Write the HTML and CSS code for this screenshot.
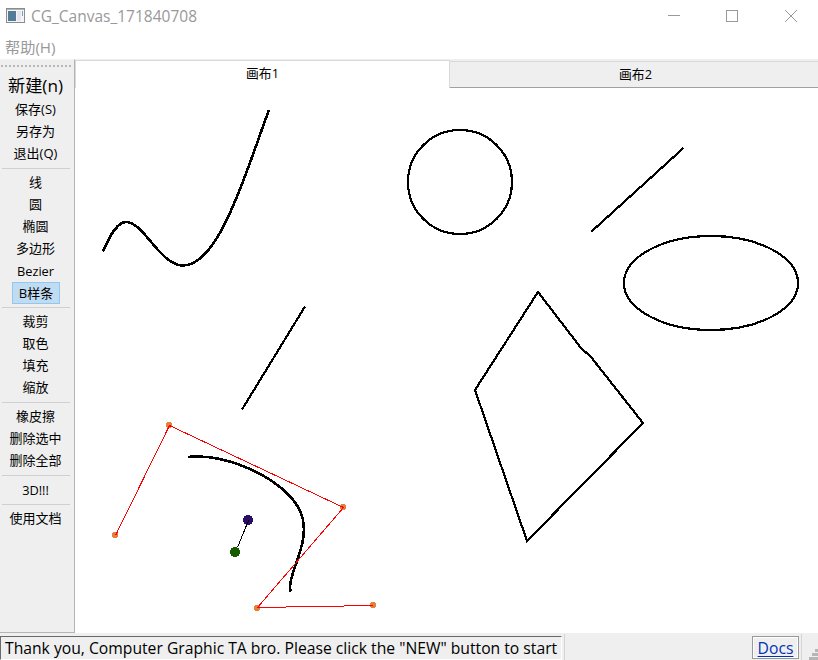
FILE: index.html
```
<!DOCTYPE html>
<html lang="zh-CN">
<head>
<meta charset="utf-8">
<title>CG_Canvas_171840708</title>
<link rel="stylesheet" href="styles.css">
</head>
<body>
<div class="window">
  <header class="titlebar">
    <svg class="app-icon" width="19" height="15" viewBox="0 0 19 15" shape-rendering="crispEdges">
      <rect x="0.5" y="0.5" width="18" height="14" fill="#f4f5f8" stroke="#8c8c8c"/>
      <rect x="1" y="1" width="17" height="1" fill="#b4b4b4"/>
      <rect x="2" y="3" width="8" height="10" fill="#547c96"/>
      <rect x="11" y="3" width="4" height="10" fill="#e4e5ee"/>
      <rect x="16" y="3" width="1" height="5" fill="#7da0b8"/>
    </svg>
    <span class="title">CG_Canvas_171840708</span>
    <svg class="controls" width="130" height="14" viewBox="0 0 130 14" fill="none" stroke="#999">
      <path d="M0 6.500H12M58.500 1.500H69.500V12.500H58.500Z" shape-rendering="crispEdges"/>
      <path d="M117 1L129 13M129 1L117 13"/>
    </svg>
  </header>
  <nav class="menubar"><span>帮助(H)</span></nav>
  <div class="workspace">
    <aside class="toolbar">
      <div class="handle"></div>
      <button class="tool new">新建(n)</button>
      <button class="tool">保存(S)</button>
      <button class="tool">另存为</button>
      <button class="tool">退出(Q)</button>
      <hr>
      <button class="tool">线</button>
      <button class="tool">圆</button>
      <button class="tool">椭圆</button>
      <button class="tool">多边形</button>
      <button class="tool latin">Bezier</button>
      <button class="tool selected">B样条</button>
      <hr>
      <button class="tool">裁剪</button>
      <button class="tool">取色</button>
      <button class="tool">填充</button>
      <button class="tool">缩放</button>
      <hr>
      <button class="tool">橡皮擦</button>
      <button class="tool">删除选中</button>
      <button class="tool">删除全部</button>
      <hr>
      <button class="tool latin">3D!!!</button>
      <hr>
      <button class="tool">使用文档</button>
    </aside>
    <main class="main">
      <div class="tabs">
        <div class="tab active">画布1</div>
        <div class="tab">画布2</div>
      </div>
      <svg class="canvas" width="743" height="545" viewBox="75 88 743 545" fill="none" shape-rendering="crispEdges">
        <g stroke="#000" stroke-width="2.200">
          <path stroke-width="2.600" d="M103 251.500C111 233 118 222 126 222C144 222 160 265.500 183 265.500C220 265.500 247 168 269 110"/>
          <circle cx="460" cy="182" r="52"/>
          <path d="M591.500 231.500L683.500 148"/>
          <ellipse cx="711" cy="283" rx="87" ry="47"/>
          <path d="M305 306.500L242 409.500"/>
          <path d="M538 292L581 348L591 357L643 423L527 541L475 390Z"/>
        </g>
        <g fill="#e67e3c">
          <circle cx="115" cy="535" r="3.200"/>
          <circle cx="169" cy="425" r="3.200"/>
          <circle cx="343" cy="507" r="3.200"/>
          <circle cx="257" cy="608" r="3.200"/>
          <circle cx="373" cy="605" r="3.200"/>
        </g>
        <path stroke="#000" stroke-width="2.600" d="M188 457C227 452.300 285 479.700 299.700 510.200C314.300 540.700 285.700 574.300 290.700 591.500"/>
        <path stroke="#f00" d="M115.500 535.500L169.500 425.500L343.500 507.500L257.500 607.500L373.500 605.500"/>
        <circle cx="248" cy="520" r="5" fill="#2a0e66"/>
        <circle cx="235" cy="552" r="5" fill="#185c00"/>
        <path stroke="#000" d="M237.500 547.500L248.500 520.500"/>
      </svg>
    </main>
  </div>
  <footer class="statusbar">
    <div class="message"><span>Thank you, Computer Graphic TA bro. Please click the "NEW" button to start</span></div>
    <div class="divider"></div>
    <div class="docs"><a href="#">Docs</a></div>
    <div class="divider end"></div>
    <svg class="grip" width="10" height="12" viewBox="0 0 10 12" fill="#b5b5b5" shape-rendering="crispEdges">
      <path d="M7 1h3v3H7zM4 5h3v3H4zM7 5h3v3H7zM1 9h3v3H1zM4 9h3v3H4zM7 9h3v3H7z"/>
    </svg>
  </footer>
</div>
</body>
</html>
```
FILE: styles.css
```
* { box-sizing: border-box; }
body {
  margin: 0;
  overflow: hidden;
  background: #fff;
  color: #000;
  font: 12px "Open Sans", "Noto Sans CJK SC", sans-serif;
}
.window { display: flex; flex-direction: column; width: 818px; height: 660px; }
.titlebar { display: flex; align-items: center; height: 31px; padding: 0 20px 0 6px; color: #999; }
.title { margin-left: 6px; font-size: 15.500px; line-height: 20px; }
.controls { margin-left: auto; }
.menubar { height: 28px; padding: 6px 5px; color: #999; font-size: 15.200px; line-height: 20px; }
.workspace { display: flex; height: 574px; }
.toolbar {
  display: flex;
  flex-direction: column;
  width: 75px;
  padding: 5px 3px 0 2px;
  background: #efefef;
  border-right: 1px solid #b4b4b4;
  border-bottom: 1px solid #b4b4b4;
  border-top: 1px solid #f4f4f4;
}
.handle {
  height: 2px;
  margin-left: -1px;
  background: repeating-linear-gradient(90deg, #b8b8b8 0 2px, transparent 2px 4px);
}
.tool {
  width: 67px;
  height: 22px;
  padding: 0 0 2px;
  border: 0;
  background: none;
  color: #000;
  font: 13px/20px "Open Sans", "Noto Sans CJK SC", sans-serif;
  white-space: nowrap;
}
.tool.latin { padding: 0; font-size: 12.800px; line-height: 21px; }
.tool.new { height: 32px; padding: 0; font-size: 17.200px; line-height: 38px; }
.tool.selected {
  align-self: center;
  width: 48px;
  margin-right: 1px;
  padding: 0;
  border: 1px solid #90c8f0;
  background: #c0dcf3;
  line-height: 21px;
}
hr { width: 68px; height: 1px; margin: 3px 0; border: 0; background: #cfcfcf; }
.main { width: 743px; }
.tabs { display: flex; height: 29px; background: #efefef; }
.tab {
  flex: 1;
  height: 27px;
  margin-top: 2px;
  padding-left: 3px;
  border-top: 1px solid #d9d9d9;
  border-bottom: 1px solid #a0a0a0;
  font-size: 12.800px;
  line-height: 25px;
  text-align: center;
}
.tab.active {
  flex: none;
  width: 375px;
  height: 28px;
  margin-top: 1px;
  padding-left: 0;
  background: #fff;
  border: solid #d9d9d9;
  border-width: 1px 1px 0;
}
.canvas { display: block; }
.statusbar { display: flex; height: 27px; padding-top: 1px; background: #efefef; }
.message {
  width: 562px;
  height: 24px;
  margin-top: 2px;
  padding-left: 4px;
  border: 1px solid #696969;
  border-right-color: #fff;
  border-bottom-color: #fff;
  font-size: 15.690px;
  line-height: 23px;
  white-space: nowrap;
}
.divider { width: 1px; margin-left: 2px; background: #d5d5d5; }
.docs {
  width: 47px;
  height: 23px;
  margin: 2px 0 0 187px;
  border: 1px solid #999;
  box-shadow: inset 0 0 0 1px #fff;
  font-size: 15.690px;
  line-height: 23px;
  text-align: center;
}
.docs a { color: #0033b5; text-underline-offset: 2px; }
.grip { margin: 14px 0 0 auto; }
```
